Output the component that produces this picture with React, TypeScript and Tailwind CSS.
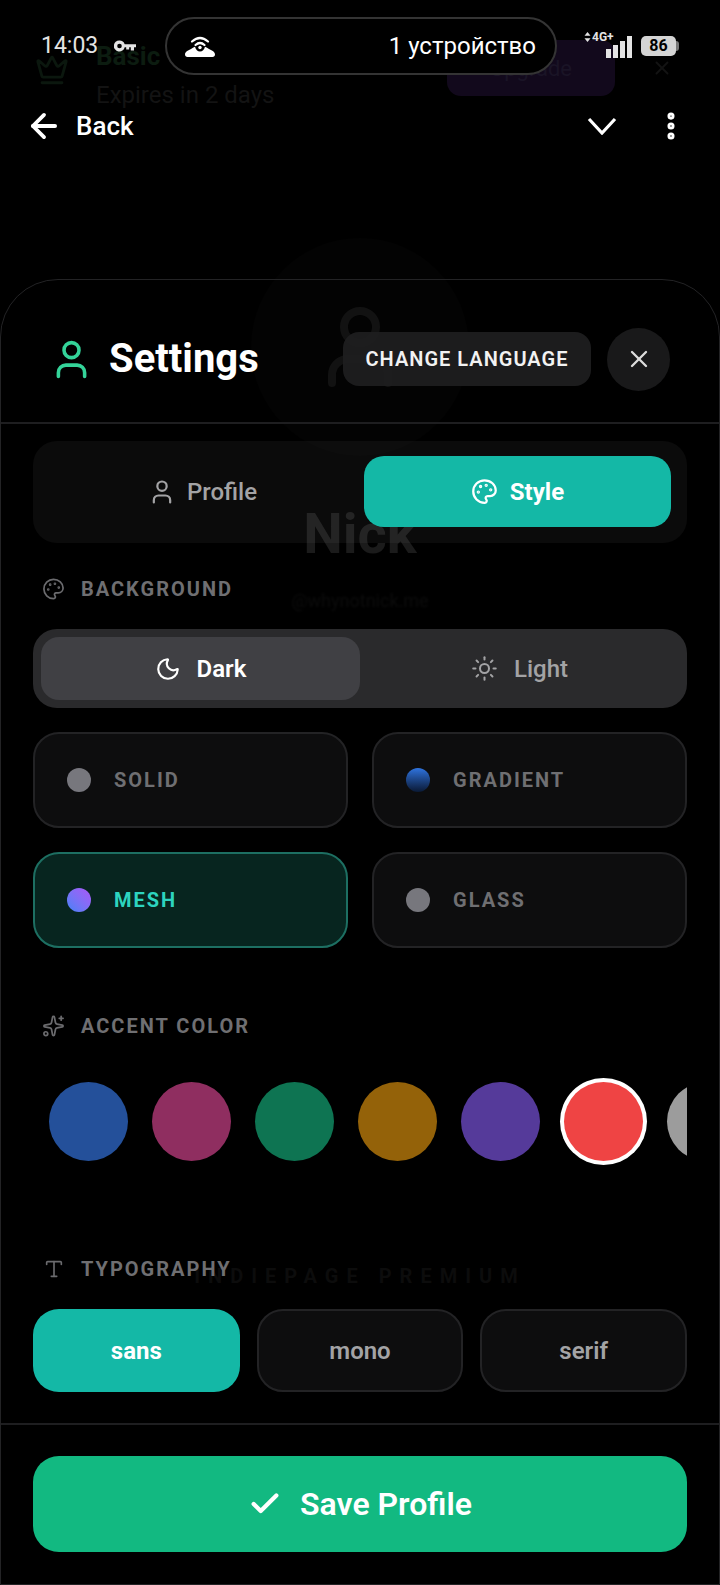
import React from 'react';
import { ArrowLeft, Check, Crown, Moon, MoreVertical, Palette, Sparkles, Sun, Type, User, X } from 'lucide-react';

const FONT = 'font-[Roboto,_"Liberation_Sans",_sans-serif]';
const ACCENTS = ['bg-[#24509a]', 'bg-[#8f2e60]', 'bg-[#0e7452]', 'bg-[#946209]', 'bg-[#553a9a]', 'bg-[#ef4444]', 'bg-[#9c9c9c]'];

const SectionLabel: React.FC<{ icon: React.ReactNode; label: string }> = ({ icon, label }) => (
  <div className="flex items-center h-[24px] pl-[9px] gap-[16px]">
    <span className="w-[23px] flex justify-center text-[#6b6b6e]">{icon}</span>
    <span className="text-[20px] font-bold tracking-[0.1em] text-[#6f6f72]">{label}</span>
  </div>
);

const StyleCard: React.FC<{ label: string; dot: string; active?: boolean }> = ({ label, dot, active }) => (
  <button
    className={`h-[96px] rounded-[26px] border-2 flex items-center pl-[32px] gap-[23px] ${
      active ? 'bg-[#07251f] border-[#1d6f62]' : 'bg-[#0d0d0e] border-[#232325]'
    }`}
  >
    <span className={`w-[24px] h-[24px] rounded-full ${dot}`} />
    <span className={`text-[20px] font-bold tracking-[0.1em] ${active ? 'text-[#2dd4bf]' : 'text-[#6f6f72]'}`}>{label}</span>
  </button>
);

// the profile page, dimmed, behind the settings sheet
const Backdrop: React.FC = () => (
  <div className="absolute inset-0 pointer-events-none">
    <div className="flex items-start pt-[40px] pl-[35px] pr-[47px]">
      <Crown size={34} strokeWidth={2} className="text-[#0b170e] mt-[13px]" />
      <div className="ml-[27px]">
        <p className="text-[26px] font-bold leading-[32px] text-[#0c1c10]">Basic</p>
        <p className="text-[24px] leading-[32px] mt-[7px] text-[#131313]">Expires in 2 days</p>
      </div>
      <div className="ml-auto w-[168px] h-[56px] rounded-[14px] bg-[#12091c] flex items-center justify-center text-[22px] text-[#1a1426]">Upgrade</div>
      <X size={22} className="ml-[36px] mt-[17px] text-[#131313]" />
    </div>
    <div className="flex flex-col items-center mt-[127px]">
      <div className="w-[218px] h-[218px] rounded-full bg-[#030303] flex items-center justify-center">
        <User size={96} strokeWidth={2} className="text-[#121212]" />
      </div>
      <p className="text-[56px] font-bold leading-[64px] mt-[46px] text-[#1b1b1b]">Nick</p>
      <p className="text-[18px] leading-[24px] mt-[23px] text-[#0c0c0c] blur-[1px]">@whynotnick.me</p>
      <p className="text-[20px] font-bold tracking-[0.4em] mt-[648px] text-[#0c0c0c]">INDIEPAGE PREMIUM</p>
    </div>
  </div>
);

const StatusBar: React.FC = () => (
  <div className="relative flex items-center h-[58px] mt-[17px] pl-[41px] text-white">
    <span className="w-[73px] text-[23px] text-[#e4e4e4]">14:03</span>
    <svg width="22" height="12" viewBox="0 0 22 12" fill="#e4e4e4">
      <path fillRule="evenodd" d="M5.5 0.5a5.5 5.5 0 0 1 5.2 3.7H22v3h-2v3.3h-3.2V7.2h-1.600v2.400h-3V7.200h-1.500A5.500 5.500 0 1 1 5.500 0.500zm0 3.200a2.300 2.300 0 1 0 0 4.600 2.300 2.300 0 0 0 0-4.600z" />
    </svg>
    <div className="ml-[29px] w-[392px] h-[58px] rounded-full border-2 border-[#343434] bg-black flex items-center pl-[18px] pr-[19px] justify-between">
      <svg width="30" height="22" viewBox="0 0 30 22" fill="none">
        <path d="M7 6.500Q15 -0.500 23 6.500" stroke="#fff" strokeWidth="2.200" strokeLinecap="round" />
        <path d="M10.500 10Q15 6 19.500 10" stroke="#fff" strokeWidth="2.200" strokeLinecap="round" />
        <circle cx="15" cy="12.500" r="1.700" fill="#fff" />
        <path d="M0 19.500C0 16.500 3 15.500 5.500 14.200C7.500 13.200 8.500 12 10 11.700C10.800 14.500 12.500 16.500 15 16.500C17.500 16.500 19.200 14.500 20 11.700C21.500 12 22.500 13.200 24.500 14.200C27 15.500 30 16.500 30 19.500C30 21 29 22 27.500 22H2.500C1 22 0 21 0 19.500Z" fill="#fff" />
      </svg>
      <span className="text-[24px] text-white">1 устройство</span>
    </div>
    <div className="ml-[38px] relative w-[37px] h-[24px] flex items-end gap-[2px] justify-end">
      <svg className="absolute left-[-11px] top-[-2px]" width="7" height="10" viewBox="0 0 7 10" fill="#e4e4e4">
        <path d="M3.500 0L6.500 3.800H0.500Z" />
        <path d="M3.500 10L6.500 6.200H0.500Z" />
      </svg>
      <span className="absolute left-[-3px] top-[-3px] text-[12px] font-bold leading-[12px] text-[#e4e4e4]">4G+</span>
      <span className="w-[5px] h-[9px] bg-[#e4e4e4]" />
      <span className="w-[5px] h-[13px] bg-[#e4e4e4]" />
      <span className="w-[5px] h-[17px] bg-[#e4e4e4]" />
      <span className="w-[5px] h-[22px] bg-[#e4e4e4]" />
    </div>
    <div className="ml-[9px] w-[35px] h-[20px] rounded-[5px] bg-[#d4d4d4] flex items-center justify-center text-[16px] font-bold text-black">86</div>
    <span className="w-[3px] h-[10px] rounded-r-sm bg-[#777]" />
  </div>
);

const AppHeader: React.FC = () => (
  <div className="relative flex items-center h-[40px] mt-[31px] pl-[25px] pr-[32px] text-white">
    <ArrowLeft size={38} strokeWidth={2.4} />
    <span className="ml-[13px] text-[26px] font-medium">Back</span>
    <svg className="ml-auto" width="30" height="18" viewBox="0 0 30 18" fill="none">
      <path d="M2 2L15 16L28 2" stroke="#fff" strokeWidth="3.200" />
    </svg>
    <MoreVertical size={34} strokeWidth={3} className="ml-[37px]" />
  </div>
);

const App: React.FC = () => {
  return (
    <div className={`relative w-[720px] h-[1585px] bg-black overflow-hidden flex flex-col ${FONT}`}>
      <Backdrop />
      <StatusBar />
      <AppHeader />

      {/* Settings sheet */}
      <div className="relative mt-[133px] flex-1 flex flex-col rounded-t-[58px] border border-[#232325]">
        <div className="flex items-center h-[144px] pt-[16px] border-b-2 border-[#1e1e20] pl-[48px] pr-[49px]">
          <User size={45} strokeWidth={1.9} className="text-[#34d399]" />
          <h1 className="ml-[15px] text-[40px] font-bold text-white">Settings</h1>
          <button className="ml-auto h-[54px] w-[248px] rounded-[16px] bg-[#1f1f20]/90 text-[20px] font-semibold tracking-[0.05em] text-[#f2f2f2]">
            CHANGE LANGUAGE
          </button>
          <button className="ml-[16px] w-[63px] h-[63px] rounded-full bg-[#1c1c1d]/90 flex items-center justify-center text-[#dcdcdc]">
            <X size={28} strokeWidth={2} />
          </button>
        </div>

        <div className="flex-1 px-[32px] pt-[17px]">
          {/* Tabs */}
          <div className="grid grid-cols-2 gap-[8px] h-[102px] px-[16px] pt-[15px] pb-[16px] rounded-[24px] bg-white/[0.045]">
            <button className="flex items-center justify-center gap-[11px] text-[24px] font-medium text-[#a3a3a5]">
              <User size={28} strokeWidth={1.900} />
              Profile
            </button>
            <button className="flex items-center justify-center gap-[12px] rounded-[20px] bg-[#14b8a6] text-[24px] font-bold text-white">
              <Palette size={27} strokeWidth={2} />
              Style
            </button>
          </div>

          <div className="mt-[34px]">
            <SectionLabel icon={<Palette size={24} strokeWidth={1.8} />} label="BACKGROUND" />
          </div>

          {/* Mode */}
          <div className="grid grid-cols-2 h-[79px] mt-[28px] py-[8px] px-[8px] rounded-[24px] bg-[#2a2a2c]">
            <button className="flex items-center justify-center gap-[16px] rounded-[18px] bg-[#404044] text-[24px] font-semibold text-white">
              <Moon size={26} strokeWidth={2} />
              Dark
            </button>
            <button className="flex items-center justify-center gap-[16px] text-[24px] font-medium text-[#a3a3a5]">
              <Sun size={27} strokeWidth={1.8} />
              Light
            </button>
          </div>

          <div className="grid grid-cols-2 gap-x-[24px] gap-y-[24px] mt-[24px]">
            <StyleCard label="SOLID" dot="bg-[#77777d]" />
            <StyleCard label="GRADIENT" dot="bg-gradient-to-b from-[#2f74e0] to-[#0a1a36]" />
            <StyleCard label="MESH" dot="bg-gradient-to-tr from-[#3b82f6] to-[#a855f7]" active />
            <StyleCard label="GLASS" dot="bg-[#77777d]" />
          </div>

          <div className="mt-[66px]">
            <SectionLabel icon={<Sparkles size={24} strokeWidth={1.8} />} label="ACCENT COLOR" />
          </div>

          <div className="flex items-center gap-[24px] h-[88px] mt-[39px] pl-[16px] overflow-hidden">
            {ACCENTS.map((color, idx) => (
              <span
                key={color}
                className={`shrink-0 w-[79px] h-[79px] rounded-full ${color} ${idx === 5 ? 'ring-4 ring-white' : ''}`}
              />
            ))}
          </div>

          <div className="mt-[92px]">
            <SectionLabel icon={<Type size={22} strokeWidth={1.8} />} label="TYPOGRAPHY" />
          </div>

          <div className="grid grid-cols-3 gap-[17px] mt-[28px]">
            <button className="h-[83px] rounded-[26px] bg-[#14b8a6] text-[24px] font-bold text-white">sans</button>
            <button className="h-[83px] rounded-[26px] border-2 border-[#232325] bg-[#0d0d0e] text-[24px] font-semibold text-[#a3a3a5]">mono</button>
            <button className="h-[83px] rounded-[26px] border-2 border-[#232325] bg-[#0d0d0e] text-[24px] font-semibold text-[#a3a3a5]">serif</button>
          </div>
        </div>

        {/* Footer */}
        <div className="h-[161px] border-t-2 border-[#1e1e20] px-[32px] pt-[31px]">
          <button className="w-full h-[96px] rounded-[26px] bg-[#12b981] flex items-center justify-center gap-[18px] text-[32px] font-semibold text-white">
            <Check size={34} strokeWidth={3} />
            Save Profile
          </button>
        </div>
      </div>
    </div>
  );
};

export default App;
